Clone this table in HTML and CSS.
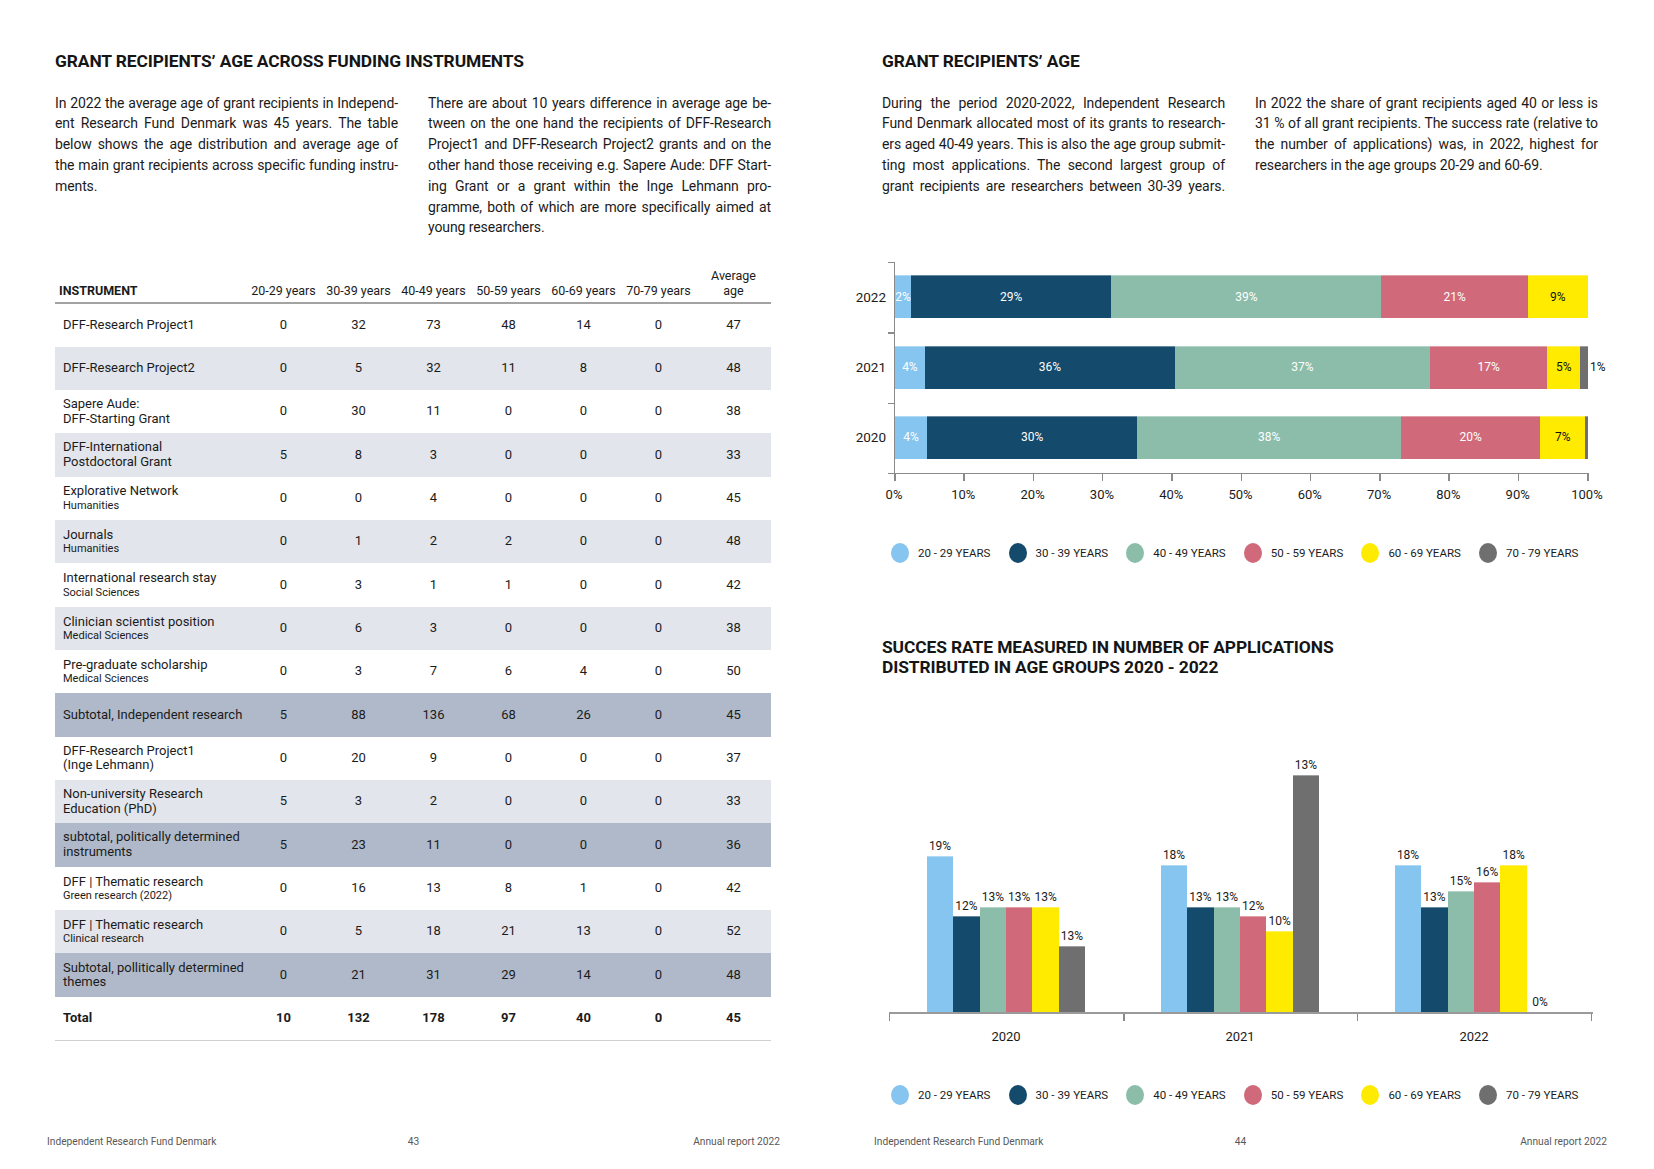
FILE: index.html
```html
<!DOCTYPE html>
<html lang="en">
<head>
<meta charset="utf-8">
<title>Grant recipients' age</title>
<link rel="stylesheet" href="styles.css">
</head>
<body>
<div class="spread">

  <section class="page">
    <h1 class="title">GRANT RECIPIENTS’ AGE ACROSS FUNDING INSTRUMENTS</h1>
    <div class="intro">
      <p class="para">
        <span class="ln">In 2022 the average age of grant recipients in Independ-</span>
        <span class="ln">ent Research Fund Denmark was 45 years. The table</span>
        <span class="ln">below shows the age distribution and average age of</span>
        <span class="ln">the main grant recipients across specific funding instru-</span>
        <span class="ln last">ments.</span>
      </p>
      <p class="para">
        <span class="ln">There are about 10 years difference in average age be-</span>
        <span class="ln">tween on the one hand the recipients of DFF-Research</span>
        <span class="ln">Project1 and DFF-Research Project2 grants and on the</span>
        <span class="ln">other hand those receiving e.g. Sapere Aude: DFF Start-</span>
        <span class="ln">ing Grant or a grant within the Inge Lehmann pro-</span>
        <span class="ln">gramme, both of which are more specifically aimed at</span>
        <span class="ln last">young researchers.</span>
      </p>
    </div>

    <table class="grants">
      <colgroup>
        <col class="c-inst"><col class="c-num"><col class="c-num"><col class="c-num"><col class="c-num"><col class="c-num"><col class="c-num"><col class="c-num">
      </colgroup>
      <thead>
        <tr>
          <th class="inst">INSTRUMENT</th>
          <th>20-29 years</th><th>30-39 years</th><th>40-49 years</th><th>50-59 years</th><th>60-69 years</th><th>70-79 years</th><th>Average<br>age</th>
        </tr>
      </thead>
      <tbody>
        <tr><td class="inst">DFF-Research Project1</td><td>0</td><td>32</td><td>73</td><td>48</td><td>14</td><td>0</td><td>47</td></tr>
        <tr class="alt"><td class="inst">DFF-Research Project2</td><td>0</td><td>5</td><td>32</td><td>11</td><td>8</td><td>0</td><td>48</td></tr>
        <tr><td class="inst">Sapere Aude:<br>DFF-Starting Grant</td><td>0</td><td>30</td><td>11</td><td>0</td><td>0</td><td>0</td><td>38</td></tr>
        <tr class="alt"><td class="inst">DFF-International<br>Postdoctoral Grant</td><td>5</td><td>8</td><td>3</td><td>0</td><td>0</td><td>0</td><td>33</td></tr>
        <tr><td class="inst">Explorative Network<span class="sub">Humanities</span></td><td>0</td><td>0</td><td>4</td><td>0</td><td>0</td><td>0</td><td>45</td></tr>
        <tr class="alt"><td class="inst">Journals<span class="sub">Humanities</span></td><td>0</td><td>1</td><td>2</td><td>2</td><td>0</td><td>0</td><td>48</td></tr>
        <tr><td class="inst">International research stay<span class="sub">Social Sciences</span></td><td>0</td><td>3</td><td>1</td><td>1</td><td>0</td><td>0</td><td>42</td></tr>
        <tr class="alt"><td class="inst">Clinician scientist position<span class="sub">Medical Sciences</span></td><td>0</td><td>6</td><td>3</td><td>0</td><td>0</td><td>0</td><td>38</td></tr>
        <tr><td class="inst">Pre-graduate scholarship<span class="sub">Medical Sciences</span></td><td>0</td><td>3</td><td>7</td><td>6</td><td>4</td><td>0</td><td>50</td></tr>
        <tr class="subtotal"><td class="inst">Subtotal, Independent research</td><td>5</td><td>88</td><td>136</td><td>68</td><td>26</td><td>0</td><td>45</td></tr>
        <tr><td class="inst">DFF-Research Project1<br>(Inge Lehmann)</td><td>0</td><td>20</td><td>9</td><td>0</td><td>0</td><td>0</td><td>37</td></tr>
        <tr class="alt"><td class="inst">Non-university Research<br>Education (PhD)</td><td>5</td><td>3</td><td>2</td><td>0</td><td>0</td><td>0</td><td>33</td></tr>
        <tr class="subtotal"><td class="inst">subtotal, politically determined<br>instruments</td><td>5</td><td>23</td><td>11</td><td>0</td><td>0</td><td>0</td><td>36</td></tr>
        <tr><td class="inst">DFF | Thematic research<span class="sub">Green research (2022)</span></td><td>0</td><td>16</td><td>13</td><td>8</td><td>1</td><td>0</td><td>42</td></tr>
        <tr class="alt"><td class="inst">DFF | Thematic research<span class="sub">Clinical research</span></td><td>0</td><td>5</td><td>18</td><td>21</td><td>13</td><td>0</td><td>52</td></tr>
        <tr class="subtotal"><td class="inst">Subtotal, pollitically determined<br>themes</td><td>0</td><td>21</td><td>31</td><td>29</td><td>14</td><td>0</td><td>48</td></tr>
      </tbody>
      <tfoot>
        <tr class="total"><td class="inst">Total</td><td>10</td><td>132</td><td>178</td><td>97</td><td>40</td><td>0</td><td>45</td></tr>
      </tfoot>
    </table>

    <footer class="folio">
      <span>Independent Research Fund Denmark</span>
      <span class="num">43</span>
      <span class="pub">Annual report 2022</span>
    </footer>
  </section>

  <section class="page">
    <h1 class="title">GRANT RECIPIENTS’ AGE</h1>
    <div class="intro">
      <p class="para">
        <span class="ln">During the period 2020-2022, Independent Research</span>
        <span class="ln">Fund Denmark allocated most of its grants to research-</span>
        <span class="ln">ers aged 40-49 years. This is also the age group submit-</span>
        <span class="ln">ting most applications. The second largest group of</span>
        <span class="ln">grant recipients are researchers between 30-39 years.</span>
      </p>
      <p class="para">
        <span class="ln">In 2022 the share of grant recipients aged 40 or less is</span>
        <span class="ln">31 % of all grant recipients. The success rate (relative to</span>
        <span class="ln">the number of applications) was, in 2022, highest for</span>
        <span class="ln last">researchers in the age groups 20-29 and 60-69.</span>
      </p>
    </div>

    <div class="hchart">
      <div class="hyears">
        <span>2022</span><span>2021</span><span>2020</span>
      </div>
      <div class="hticks"></div>
      <div class="hplot">
        <div class="hrow">
          <div class="hbar">
            <div class="seg c1" style="width:2.3%"><span>2%</span></div>
            <div class="seg c2" style="width:28.9%"><span>29%</span></div>
            <div class="seg c3" style="width:39.0%"><span>39%</span></div>
            <div class="seg c4" style="width:21.1%"><span>21%</span></div>
            <div class="seg c5" style="width:8.7%"><span>9%</span></div>
          </div>
        </div>
        <div class="hrow">
          <div class="hbar">
            <div class="seg c1" style="width:4.3%"><span>4%</span></div>
            <div class="seg c2" style="width:36.1%"><span>36%</span></div>
            <div class="seg c3" style="width:36.8%"><span>37%</span></div>
            <div class="seg c4" style="width:16.9%"><span>17%</span></div>
            <div class="seg c5" style="width:4.8%"><span>5%</span></div>
            <div class="seg c6" style="width:1.1%"><span class="outside">1%</span></div>
          </div>
        </div>
        <div class="hrow">
          <div class="hbar">
            <div class="seg c1" style="width:4.6%"><span>4%</span></div>
            <div class="seg c2" style="width:30.4%"><span>30%</span></div>
            <div class="seg c3" style="width:38.1%"><span>38%</span></div>
            <div class="seg c4" style="width:20.1%"><span>20%</span></div>
            <div class="seg c5" style="width:6.5%"><span>7%</span></div>
            <div class="seg c6" style="width:0.4%"></div>
          </div>
        </div>
      </div>
      <div class="xaxis">
        <div class="xticks"></div>
        <div class="xlabels">
          <span>0%</span><span>10%</span><span>20%</span><span>30%</span><span>40%</span><span>50%</span><span>60%</span><span>70%</span><span>80%</span><span>90%</span><span>100%</span>
        </div>
      </div>
    </div>

    <ul class="legend legend-top">
      <li><i class="dot c1"></i>20 - 29 YEARS</li>
      <li><i class="dot c2"></i>30 - 39 YEARS</li>
      <li><i class="dot c3"></i>40 - 49 YEARS</li>
      <li><i class="dot c4"></i>50 - 59 YEARS</li>
      <li><i class="dot c5"></i>60 - 69 YEARS</li>
      <li><i class="dot c6"></i>70 - 79 YEARS</li>
    </ul>

    <h2 class="title title-2">SUCCES RATE MEASURED IN NUMBER OF APPLICATIONS<br>DISTRIBUTED IN AGE GROUPS 2020 - 2022</h2>

    <div class="vchart">
      <div class="vplot">
        <div class="vgroup">
          <div class="vbar"><span>19%</span><i class="c1" style="height:156px"></i></div>
          <div class="vbar"><span>12%</span><i class="c2" style="height:96px"></i></div>
          <div class="vbar"><span>13%</span><i class="c3" style="height:105px"></i></div>
          <div class="vbar"><span>13%</span><i class="c4" style="height:105px"></i></div>
          <div class="vbar"><span>13%</span><i class="c5" style="height:105px"></i></div>
          <div class="vbar"><span>13%</span><i class="c6" style="height:66px"></i></div>
        </div>
        <div class="vgroup">
          <div class="vbar"><span>18%</span><i class="c1" style="height:147px"></i></div>
          <div class="vbar"><span>13%</span><i class="c2" style="height:105px"></i></div>
          <div class="vbar"><span>13%</span><i class="c3" style="height:105px"></i></div>
          <div class="vbar"><span>12%</span><i class="c4" style="height:96px"></i></div>
          <div class="vbar"><span>10%</span><i class="c5" style="height:81px"></i></div>
          <div class="vbar"><span>13%</span><i class="c6" style="height:237px"></i></div>
        </div>
        <div class="vgroup">
          <div class="vbar"><span>18%</span><i class="c1" style="height:147px"></i></div>
          <div class="vbar"><span>13%</span><i class="c2" style="height:105px"></i></div>
          <div class="vbar"><span>15%</span><i class="c3" style="height:121px"></i></div>
          <div class="vbar"><span>16%</span><i class="c4" style="height:130px"></i></div>
          <div class="vbar"><span>18%</span><i class="c5" style="height:147px"></i></div>
          <div class="vbar"><span>0%</span><i class="c6" style="height:0px"></i></div>
        </div>
      </div>
      <div class="vticks"></div>
      <div class="vyears"><span>2020</span><span>2021</span><span>2022</span></div>
    </div>

    <ul class="legend legend-bottom">
      <li><i class="dot c1"></i>20 - 29 YEARS</li>
      <li><i class="dot c2"></i>30 - 39 YEARS</li>
      <li><i class="dot c3"></i>40 - 49 YEARS</li>
      <li><i class="dot c4"></i>50 - 59 YEARS</li>
      <li><i class="dot c5"></i>60 - 69 YEARS</li>
      <li><i class="dot c6"></i>70 - 79 YEARS</li>
    </ul>

    <footer class="folio">
      <span>Independent Research Fund Denmark</span>
      <span class="num">44</span>
      <span class="pub">Annual report 2022</span>
    </footer>
  </section>

</div>
</body>
</html>
```

FILE: styles.css
```css
* { box-sizing: border-box; }

html, body {
  margin: 0;
  padding: 0;
  background: #ffffff;
}

body {
  font-family: Roboto, "Liberation Sans", sans-serif;
  color: #1b1b1b;
}

.spread {
  display: flex;
  width: 1654px;
  height: 1169px;
}

.page {
  width: 827px;
  height: 1169px;
  padding: 51px 56px 20px 55px;
  display: flex;
  flex-direction: column;
}

/* headings */
.title {
  margin: 0;
  font-size: 17.4px;
  line-height: 20px;
  font-weight: 700;
  letter-spacing: -0.1px;
  color: #151515;
}

/* intro text */
.intro {
  display: flex;
  gap: 30px;
  margin-top: 21.6px;
}

.para {
  width: 343px;
  margin: 0;
  font-size: 14px;
  line-height: 20.8px;
  letter-spacing: -0.1px;
}

.ln {
  display: block;
  white-space: nowrap;
  text-align: justify;
  text-align-last: justify;
}

.ln.last {
  text-align-last: left;
}

/* table */
.grants {
  width: 716px;
  margin-top: 19px;
  border-collapse: collapse;
  table-layout: fixed;
  font-size: 13px;
}

.c-inst { width: 191px; }
.c-num { width: 75px; }

.grants th {
  height: 46px;
  padding: 0 0 4px;
  vertical-align: bottom;
  text-align: center;
  font-weight: 400;
  font-size: 12.5px;
  line-height: 15px;
  border-bottom: 2px solid #a3a3a3;
  white-space: nowrap;
}

.grants th.inst {
  text-align: left;
  padding-left: 4px;
  font-weight: 700;
  font-size: 12.5px;
}

.grants td {
  height: 43.35px;
  padding: 0;
  text-align: center;
  vertical-align: middle;
  line-height: 14.5px;
}

.grants td.inst {
  text-align: left;
  padding-left: 8px;
  white-space: nowrap;
}

.grants .sub {
  display: block;
  font-size: 11px;
  line-height: 13px;
}

.grants tr.alt td { background: #e2e5ec; }
.grants tr.subtotal td { background: #b0b9c9; }

.grants tr.total td {
  font-weight: 700;
  border-bottom: 1.5px solid #d0d0d0;
}

/* footer */
.folio {
  margin-top: auto;
  margin-left: -8px;
  width: 733px;
  display: grid;
  grid-template-columns: 1fr auto 1fr;
  font-size: 10.2px;
  line-height: 14px;
  color: #585858;
}

.folio .num { text-align: center; }
.folio .pub { text-align: right; }

/* colours */
.c1 { background: #86c5ef; }
.c2 { background: #144a6b; }
.c3 { background: #8bbdaa; }
.c4 { background: #d06a7a; }
.c5 { background: #ffeb00; }
.c6 { background: #6f6f6f; }

/* horizontal stacked chart */
.hchart {
  display: grid;
  grid-template-columns: 34px 6px 694.5px;
  grid-template-rows: 212.5px auto;
  margin-top: 65px;
  margin-left: -28px;
}

.hyears {
  display: flex;
  flex-direction: column;
  font-size: 13.5px;
  padding-right: 2px;
}

.hyears span {
  height: 70.33px;
  display: flex;
  align-items: center;
  justify-content: flex-end;
}

.hticks {
  height: 212.5px;
  background: repeating-linear-gradient(to bottom, #8a8a8a 0, #8a8a8a 1.5px, transparent 1.5px, transparent 70.33px);
}

.hplot {
  border-left: 1.5px solid #8a8a8a;
  border-bottom: 1.5px solid #8a8a8a;
  display: flex;
  flex-direction: column;
}

.hrow {
  height: 70.33px;
  display: flex;
  align-items: center;
}

.hbar {
  display: flex;
  width: 693px;
  height: 43px;
}

.seg {
  position: relative;
  display: flex;
  align-items: center;
  justify-content: center;
  font-size: 12px;
  color: #ffffff;
  white-space: nowrap;
  box-shadow: inset 0 1px 0 rgba(255, 255, 255, 0.35);
}

.seg.c5 { color: #111111; }

.seg .outside {
  position: absolute;
  left: calc(100% + 2px);
  color: #111111;
}

.xaxis {
  grid-column: 3;
}

.xticks {
  width: 695px;
  height: 7px;
  background: repeating-linear-gradient(to right, #8a8a8a 0, #8a8a8a 1.5px, transparent 1.5px, transparent 69.3px);
}

.xlabels {
  display: flex;
  margin-left: -34.65px;
  margin-top: 6px;
  font-size: 13px;
  line-height: 16px;
}

.xlabels span {
  flex: 0 0 69.3px;
  text-align: center;
}

/* legend */
.legend {
  list-style: none;
  margin: 40px 0 0 9px;
  padding: 0;
  display: flex;
}

.legend li {
  flex: 0 0 117.6px;
  display: flex;
  align-items: center;
  gap: 9px;
  font-size: 11.5px;
  line-height: 20px;
  white-space: nowrap;
}

.dot {
  display: block;
  width: 18px;
  height: 20px;
  border-radius: 50%;
}

.title-2 {
  margin-top: 74px;
}

/* vertical grouped chart */
.vchart {
  margin-top: 75px;
  margin-left: 7px;
  width: 703.5px;
}

.vplot {
  display: grid;
  grid-template-columns: repeat(3, 234px);
  height: 262px;
  border-bottom: 2px solid #9a9a9a;
}

.vgroup {
  display: flex;
  align-items: flex-end;
  justify-content: center;
}

.vbar {
  width: 26.4px;
  display: flex;
  flex-direction: column;
  align-items: center;
}

.vbar span {
  font-size: 12px;
  line-height: 14px;
  margin-bottom: 3px;
  white-space: nowrap;
}

.vbar i {
  display: block;
  width: 100%;
  box-shadow: inset 0 1px 0 rgba(255, 255, 255, 0.35);
}

.vticks {
  width: 703.5px;
  height: 7px;
  background: repeating-linear-gradient(to right, #8a8a8a 0, #8a8a8a 1.5px, transparent 1.5px, transparent 234px);
}

.vyears {
  display: grid;
  grid-template-columns: repeat(3, 234px);
  margin-top: 8px;
  font-size: 13px;
  line-height: 16px;
  text-align: center;
}

.legend-bottom {
  margin-top: 40px;
}
```
